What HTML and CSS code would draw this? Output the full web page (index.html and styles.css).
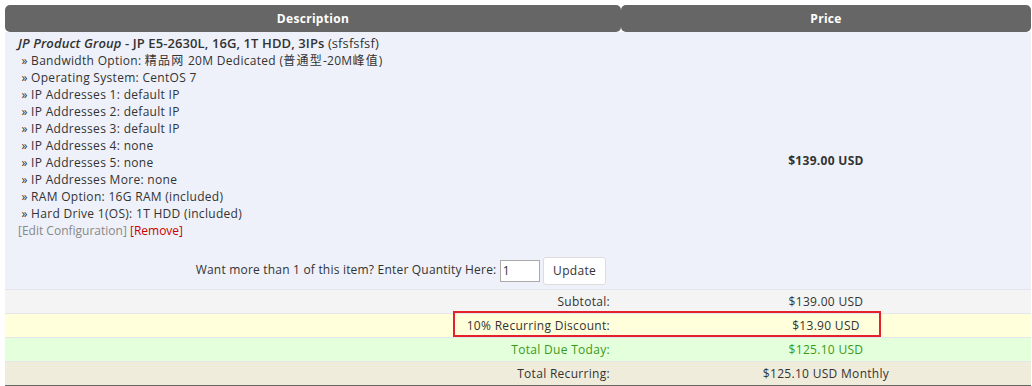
FILE: index.html
```html
<!DOCTYPE html>
<html lang="en">
<head>
  <meta charset="UTF-8">
  <title>Cart</title>
  <link rel="stylesheet" href="styles.css">
</head>
<body>
  <div class="cart">
    <table class="cart-table">
      <thead>
        <tr>
          <th class="col-desc">Description</th>
          <th class="col-price">Price</th>
        </tr>
      </thead>
      <tbody>
        <tr class="item-row">
          <td class="item-desc">
            <div class="product"><em class="group">JP Product Group</em> <strong>- JP E5-2630L, 16G, 1T HDD, 3IPs</strong> (sfsfsfsf)</div>
            <div class="opt">&nbsp;&raquo; Bandwidth Option: <span class="cjk">精品网</span> 20M Dedicated (<span class="cjk">普通型</span>-20M<span class="cjk">峰值</span>)</div>
            <div class="opt">&nbsp;&raquo; Operating System: CentOS 7</div>
            <div class="opt">&nbsp;&raquo; IP Addresses 1: default IP</div>
            <div class="opt">&nbsp;&raquo; IP Addresses 2: default IP</div>
            <div class="opt">&nbsp;&raquo; IP Addresses 3: default IP</div>
            <div class="opt">&nbsp;&raquo; IP Addresses 4: none</div>
            <div class="opt">&nbsp;&raquo; IP Addresses 5: none</div>
            <div class="opt">&nbsp;&raquo; IP Addresses More: none</div>
            <div class="opt">&nbsp;&raquo; RAM Option: 16G RAM (included)</div>
            <div class="opt">&nbsp;&raquo; Hard Drive 1(OS): 1T HDD (included)</div>
            <div class="links"><a class="edit" href="#">[Edit Configuration]</a> <a class="remove" href="#">[Remove]</a></div>
            <div class="qty">
              Want more than 1 of this item? Enter Quantity Here:
              <input type="text" class="qty-input" value="1">
              <button class="btn-update">Update</button>
            </div>
          </td>
          <td class="item-price"><strong>$139.00 USD</strong></td>
        </tr>
        <tr class="sub-row">
          <td class="label">Subtotal:</td>
          <td class="amount">$139.00 USD</td>
        </tr>
        <tr class="discount-row">
          <td class="label">10% Recurring Discount:</td>
          <td class="amount">$13.90 USD</td>
        </tr>
        <tr class="today-row">
          <td class="label">Total Due Today:</td>
          <td class="amount">$125.10 USD</td>
        </tr>
        <tr class="recurring-row">
          <td class="label">Total Recurring:</td>
          <td class="amount">$125.10 USD Monthly</td>
        </tr>
      </tbody>
    </table>
    <div class="highlight"></div>
  </div>
</body>
</html>
```

FILE: styles.css
```css
body {
  margin: 0;
  padding: 5px 1px 0 5px;
  font-family: "Open Sans", "Noto Sans CJK SC", sans-serif;
  font-size: 12px;
  letter-spacing: 0.3px;
  color: #333;
  background: #fff;
}

.cart {
  position: relative;
  width: 1026px;
}

.cart-table {
  width: 100%;
  border-collapse: separate;
  border-spacing: 0;
  table-layout: fixed;
}

.cart-table th {
  background-color: #666;
  color: #fff;
  font-weight: bold;
  font-size: 12px;
  height: 27px;
  padding: 0;
  border-radius: 5px;
  text-align: center;
}

.col-desc {
  width: 616px;
}

.item-row td {
  background-color: #eef1f9;
  line-height: 17px;
}

.item-desc {
  padding: 3px 15px 4px 13px;
  vertical-align: top;
}

.product {
  font-size: 13px;
  letter-spacing: 0.1px;
}

.product strong,
.group {
  font-weight: 600;
}

.cjk {
  letter-spacing: 1.2px;
}

.links {
  letter-spacing: 0;
}

.links a {
  text-decoration: none;
}

.edit {
  color: #888;
}

.remove {
  color: #cc0000;
}

.qty {
  text-align: right;
  margin-top: 17px;
  line-height: 28px;
  letter-spacing: 0.2px;
}

.qty-input {
  width: 40px;
  height: 22px;
  box-sizing: border-box;
  border: 1px solid #aaa;
  padding: 0 2px;
  font-family: inherit;
  font-size: 12px;
  color: #333;
  vertical-align: middle;
}

.btn-update {
  height: 28px;
  padding: 0 9px;
  border: 1px solid #ddd;
  border-radius: 3px;
  background: #fff;
  font-family: inherit;
  font-size: 12px;
  letter-spacing: 0.3px;
  color: #333;
  vertical-align: middle;
}

.item-price {
  text-align: center;
  vertical-align: middle;
}

.sub-row td,
.discount-row td,
.today-row td,
.recurring-row td {
  height: 23px;
  padding: 0;
  border-top: 1px solid #e4e6ec;
}

.label {
  text-align: right;
  padding-right: 11px !important;
}

.amount {
  text-align: center;
}

.sub-row td {
  background-color: #f4f4f4;
}

.discount-row td {
  background-color: #ffffdb;
}

.today-row td {
  background-color: #e4ffdb;
  color: #3a9a1a;
}

.recurring-row td {
  background-color: #f0ecdc;
  border-bottom: 2px solid #666;
}

.highlight {
  position: absolute;
  left: 448px;
  top: 306px;
  width: 428px;
  height: 26px;
  box-sizing: border-box;
  border: 2px solid #e5212b;
}
```
